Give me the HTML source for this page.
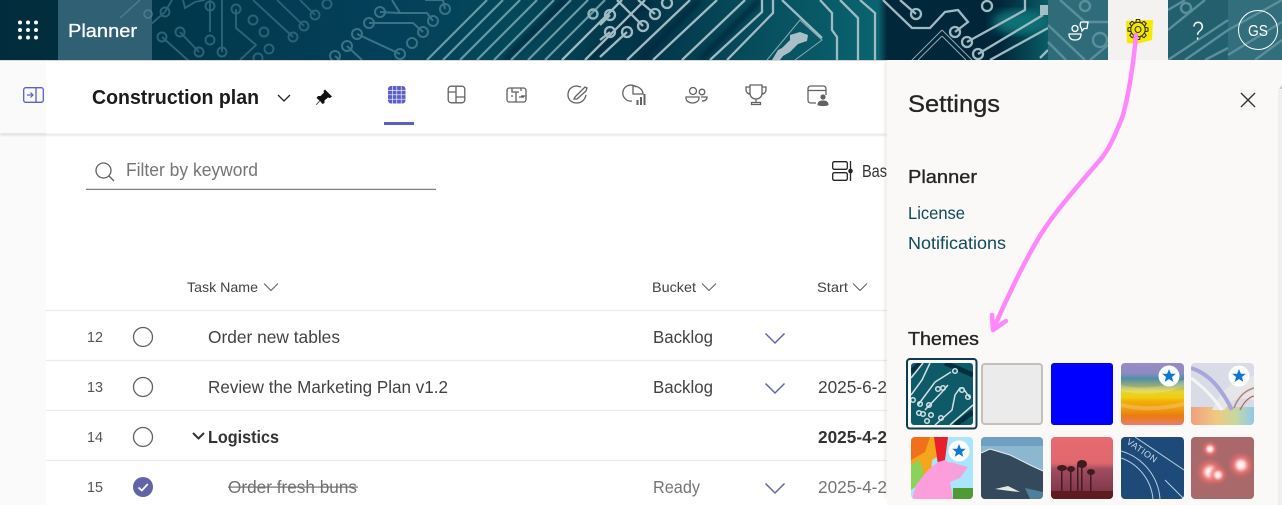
<!DOCTYPE html>
<html lang="en"><head><meta charset="utf-8"><title>Planner</title>
<style>
html,body{margin:0;padding:0;background:#fff;width:1282px;height:505px;overflow:hidden}
svg{display:block;font-family:"Liberation Sans",sans-serif;overflow:hidden}
</style></head><body>
<svg width="1282" height="505" viewBox="0 0 1282 505" xmlns="http://www.w3.org/2000/svg">
<defs>
<linearGradient id="bg" x1="0" x2="1" y1="0" y2="0">
<stop offset="0" stop-color="#02303f"/><stop offset=".3" stop-color="#03405a"/><stop offset=".4" stop-color="#05485a"/><stop offset=".5" stop-color="#023448"/><stop offset=".6" stop-color="#07505f"/><stop offset=".685" stop-color="#0a6470"/><stop offset=".692" stop-color="#01283a"/><stop offset=".78" stop-color="#01263a"/><stop offset=".82" stop-color="#0a6068"/><stop offset="1" stop-color="#1a5866"/>
</linearGradient>
<filter id="blur"><feGaussianBlur stdDeviation="5"/></filter>
<filter id="blur2"><feGaussianBlur stdDeviation="2.5"/></filter>
<filter id="sh" x="-5%" y="-50%" width="110%" height="200%"><feGaussianBlur stdDeviation="2"/></filter>
<clipPath id="bn"><rect width="1282" height="60"/></clipPath>
<clipPath id="t1"><rect x="911" y="363" width="62" height="62" rx="3"/></clipPath>
<clipPath id="t4"><rect x="1121" y="363" width="63" height="62" rx="4"/></clipPath>
<clipPath id="t5"><rect x="1191" y="363" width="63" height="62" rx="4"/></clipPath>
<clipPath id="t6"><rect x="911" y="437" width="62" height="62" rx="4"/></clipPath>
<clipPath id="t7"><rect x="981" y="437" width="62" height="62" rx="4"/></clipPath>
<clipPath id="t8"><rect x="1051" y="437" width="62" height="62" rx="4"/></clipPath>
<clipPath id="t9"><rect x="1121" y="437" width="63" height="62" rx="4"/></clipPath>
<clipPath id="t10"><rect x="1191" y="437" width="63" height="62" rx="4"/></clipPath>
<linearGradient id="g4" x1="0" x2="0" y1="0" y2="1">
<stop offset="0" stop-color="#9a8ac8"/><stop offset=".17" stop-color="#8a8cc0"/><stop offset=".25" stop-color="#4f8ea6"/><stop offset=".38" stop-color="#a0b070"/><stop offset=".45" stop-color="#e2d230"/><stop offset=".55" stop-color="#f0d010"/><stop offset=".62" stop-color="#f2ae08"/><stop offset=".75" stop-color="#ee9a10"/><stop offset=".85" stop-color="#e87c10"/><stop offset="1" stop-color="#ee7c6c"/>
</linearGradient>
<linearGradient id="g5" x1="0" x2="1" y1="0" y2="0">
<stop offset="0" stop-color="#f0a080"/><stop offset=".4" stop-color="#f0c880"/><stop offset=".7" stop-color="#c8d8a0"/><stop offset="1" stop-color="#90c8e8"/>
</linearGradient>
<linearGradient id="g8" x1="0" x2="0" y1="0" y2="1">
<stop offset="0" stop-color="#e76a70"/><stop offset=".42" stop-color="#e0686c"/><stop offset=".52" stop-color="#a04d60"/><stop offset=".85" stop-color="#83394a"/><stop offset="1" stop-color="#5e1c22"/>
</linearGradient>
<radialGradient id="gl"><stop offset="0" stop-color="#fff"/><stop offset=".25" stop-color="#ffe0e0"/><stop offset=".55" stop-color="#f07474" stop-opacity=".8"/><stop offset="1" stop-color="#d06060" stop-opacity="0"/></radialGradient>
<g id="star"><circle r="10.5" fill="#fff"/><polygon fill="#0f78d4" points="0,-7 1.9,-2.3 6.9,-2.2 3,1 4.3,5.9 0,3.1 -4.3,5.9 -3,1 -6.9,-2.2 -1.9,-2.3"/></g>
</defs>

<rect width="1282" height="505" fill="#fff"/>
<rect x="0" y="60" width="46" height="445" fill="#fafafa"/>

<!-- banner -->
<g clip-path="url(#bn)">
<rect width="1282" height="60" fill="url(#bg)"/>
<ellipse cx="1020" cy="22" rx="28" ry="12" fill="#0c7278" filter="url(#blur)"/>
<g fill="none" stroke="#012a3c" stroke-width="7" filter="url(#blur2)" opacity=".8">
<path d="M505 60 565 0M590 60 650 0M640 60 700 0M700 60 760 0"/>
</g>
<!-- dim left traces -->
<g fill="none" stroke="#2b6478" stroke-width="1.900">
<path d="M150 25 165 12M172 0 165 12M210 0V32M162 37 190 62M180 32 199 52M222 0V52M236 9V28L256 45 240 60M253 0 293 37M277 0 304 26M300 0 315 15"/>
<path d="M183 0 185 8 195 2 205 0" />
<circle cx="165" cy="12" r="4.500"/><circle cx="210" cy="6" r="4.500"/><circle cx="236" cy="9" r="4.500"/><circle cx="180" cy="32" r="4.500"/><circle cx="162" cy="37" r="4.500"/><circle cx="253" cy="20" r="4.500"/><circle cx="264" cy="32" r="4.500"/><circle cx="210" cy="40" r="4.500"/><circle cx="199" cy="52" r="4.500"/><circle cx="222" cy="52" r="4.500"/><circle cx="269" cy="49" r="4.500"/><circle cx="293" cy="37" r="4.500"/><circle cx="304" cy="26" r="4.500"/><circle cx="315" cy="15" r="4.500"/><circle cx="327" cy="4" r="4.500"/><circle cx="258" cy="58" r="4.500"/>
</g>
<g fill="none" stroke="#3a7385" stroke-width="2">
<path d="M380 12 398 13H427L433 21M369 23 390 23H413L423 32M347 46 362 60M335 56 340 60M392 0 400 13M425 0H443L445 9M357 34 400 54"/>
<circle cx="380" cy="12" r="5"/><circle cx="433" cy="21" r="5"/><circle cx="445" cy="9" r="5"/><circle cx="369" cy="23" r="5"/><circle cx="423" cy="32" r="5"/><circle cx="357" cy="34" r="5"/><circle cx="412" cy="43" r="5"/><circle cx="347" cy="46" r="5"/><circle cx="400" cy="54" r="5"/><circle cx="335" cy="56" r="5"/>
</g>
<!-- diagonal bus -->
<g fill="none" stroke="#689aa6" stroke-width="2.200">
<path d="M427 60 487 0M443 60 503 0M460 60 520 0M477 60 537 0M494 60 554 0M511 60 571 0M528 60 588 0M545 60 605 0"/>
<circle cx="593" cy="14" r="4.500" stroke="#8fb0ba" stroke-width="2.400"/>
</g>
<g fill="none" stroke="#a0bac3" stroke-width="2.300">
<path d="M562 60 622 0M585 60 645 0M627 60 690 0M653 60 717 0M682 60 745 0M710 60 762 12V0M727 60 773 13V0M782 0 822 38"/>
<path d="M617 0 643 26M638 0 655 14M600 57 627 32M600 40 610 32M600 25 610 15"/>
<path d="M820 0 832 13V30L837 37V60M840 0 858 18V60M860 0 875 13V60"/>
<path d="M883 0 912 28H930L945 12 958 10 968 22 955 32M900 0 916 14M967 42 1025 10V0M978 54 1043 15M990 60 1048 28"/>
<circle cx="610" cy="15" r="5"/><circle cx="655" cy="14" r="5"/><circle cx="667" cy="3" r="5"/><circle cx="610" cy="32" r="5"/><circle cx="627" cy="32" r="5"/><circle cx="643" cy="26" r="5"/>
<circle cx="916" cy="14" r="5"/><circle cx="987" cy="6" r="5"/><circle cx="955" cy="32" r="5"/><circle cx="967" cy="42" r="5"/><circle cx="978" cy="54" r="5"/>
<path d="M1040 58 1048 50"/>
</g>
<rect x="1040" y="5" width="8" height="10" fill="#a5bec6"/>
<g fill="none" stroke="#8fa9b3" stroke-width="1">
<path d="M942 30 912 60M942 30 972 60M942 36 918 60M942 36 966 60"/>
<path d="M767 60 800 20 822 40 795 60"/>
</g>
<path d="M772 60 778 50 782 48 790 40 790 35 800 32 808 35 807 41 798 44 790 52 783 56 780 60Z" fill="#a9bfc7"/>
<!-- chrome tiles -->
<rect x="0" y="0" width="58" height="60" fill="#02293a" opacity=".55"/>
<rect x="58" y="0" width="94" height="60" fill="#2f6074"/>
<g fill="none" stroke="#4a7d8e" stroke-width="1.500"><circle cx="148" cy="14" r="4"/><path d="M140 0 120 18"/></g>
<rect x="1048" y="0" width="60" height="60" fill="#2f6c79"/>
<rect x="1168" y="0" width="60" height="60" fill="#22606e"/>
<rect x="1228" y="0" width="54" height="60" fill="#336e7c"/>
<g fill="none" stroke="#5b8f9a" stroke-width="2.400">
<path d="M1048 42 1066 60M1048 25 1085 60M1060 0 1085 22 1108 22M1090 60 1108 45"/>
<circle cx="1100" cy="40" r="7"/><circle cx="1085" cy="6" r="5"/>
<path d="M1168 10 1185 0M1168 30 1205 0M1168 60 1228 20M1185 60 1228 30M1205 60 1228 48"/>
<circle cx="1186" cy="8" r="5"/>
<path d="M1228 30 1282 0M1228 55 1282 22M1255 60 1282 40"/>
</g>
<rect x="1108" y="0" width="60" height="60" fill="#f3f2f1"/>
</g>

<!-- waffle -->
<g fill="#fff"><circle cx="20" cy="22.500" r="2"/><circle cx="28" cy="22.500" r="2"/><circle cx="36" cy="22.500" r="2"/><circle cx="20" cy="30" r="2"/><circle cx="28" cy="30" r="2"/><circle cx="36" cy="30" r="2"/><circle cx="20" cy="37.500" r="2"/><circle cx="28" cy="37.500" r="2"/><circle cx="36" cy="37.500" r="2"/></g>
<text x="68" y="37" font-size="18.500" fill="#fff" stroke="#fff" stroke-width=".3" textLength="69" lengthAdjust="spacingAndGlyphs">Planner</text>

<!-- chat/people icon -->
<g fill="none" stroke="#fff" stroke-width="1.300">
<circle cx="1075" cy="28.500" r="3"/><path d="M1069 34H1081Q1081 40 1075 40 1069 40 1069 34Z"/>
<path d="M1081 22H1088L1087 28.500H1084L1082 31 1081.500 28.500Q1079 25 1081 22Z"/>
</g>
<!-- gear -->
<polygon points="1126,21 1153,20 1152,40 1136,44 1127,43" fill="#f6e800"/>
<g fill="none" stroke="#33330f" stroke-width="1.100" transform="translate(1138 29.500)">
<circle r="3"/><circle r="7.200"/>
<path id="tooth" d="M-2.200 -7 L-1.600 -10 H1.600 L2.200 -7"/>
<path d="M-2.200 -7 L-1.600 -10 H1.600 L2.200 -7" transform="rotate(45)"/>
<path d="M-2.200 -7 L-1.600 -10 H1.600 L2.200 -7" transform="rotate(90)"/>
<path d="M-2.200 -7 L-1.600 -10 H1.600 L2.200 -7" transform="rotate(135)"/>
<path d="M-2.200 -7 L-1.600 -10 H1.600 L2.200 -7" transform="rotate(180)"/>
<path d="M-2.200 -7 L-1.600 -10 H1.600 L2.200 -7" transform="rotate(225)"/>
<path d="M-2.200 -7 L-1.600 -10 H1.600 L2.200 -7" transform="rotate(270)"/>
<path d="M-2.200 -7 L-1.600 -10 H1.600 L2.200 -7" transform="rotate(315)"/>
</g>
<text x="1198" y="40" font-size="27" fill="#fff" stroke="#22606e" stroke-width=".5" text-anchor="middle" textLength="12" lengthAdjust="spacingAndGlyphs">?</text>
<circle cx="1258" cy="30" r="19.500" fill="none" stroke="#fff" stroke-width="1"/>
<text x="1248" y="36" font-size="16" fill="#fff" textLength="20" lengthAdjust="spacingAndGlyphs">GS</text>

<!-- header bar -->
<rect x="0" y="132" width="887" height="3" fill="#000" opacity=".16" filter="url(#sh)"/>
<rect x="0" y="60" width="46" height="73" fill="#fafafa"/>
<rect x="46" y="60" width="841" height="73.500" fill="#fff"/>
<rect x="0" y="60" width="887" height="1" fill="#d8d8d8"/>

<g fill="none" stroke="#5b5fc7" stroke-width="1.300">
<rect x="23.700" y="87.700" width="19.600" height="14.600" rx="2"/><path d="M36 88V102"/>
<path d="M27 95H33M30.500 92.500 33 95 30.500 97.500" stroke-width="1.200"/>
</g>
<text x="92" y="104" font-size="20" font-weight="700" fill="#1b1b1b" textLength="167" lengthAdjust="spacingAndGlyphs">Construction plan</text>
<path d="M278 95 284 101 290 95" fill="none" stroke="#242424" stroke-width="1.300"/>
<path d="M325 89.500 332 96.500 330 98 328 97.500 324.500 100.500 324.500 103 322.500 104 320 101 316.500 105 316 104.500 319.500 100.500 316.500 98 318 96 320.500 96 324 92.500 323.500 91Z" fill="#111"/>

<!-- tabs -->
<rect x="388" y="86" width="17.500" height="17.500" rx="3" fill="#5b5fc7"/>
<path d="M392.400 86V103.500M396.800 86V103.500M401.200 86V103.500M388 90.400H405.500M388 94.800H405.500M388 99.200H405.500" stroke="#fff" stroke-width=".6"/>
<rect x="384" y="122" width="30" height="3" fill="#5b5fc7"/>
<g fill="none" stroke="#616161" stroke-width="1.300">
<rect x="448.200" y="86.200" width="16.600" height="16.600" rx="3"/><path d="M456 86.500V103M448.500 92H456M456 97H464.500"/>
<rect x="507" y="88" width="19" height="14" rx="2.500"/><path d="M512 88V92H519M516 92V102M521 96H526M519 97H524M511 96H513M521 88V91"/>
<path d="M581 87 577 86C571 86 568 90 568 95 568 100 572 103 577 103 581 103 585 100 586 95"/><path d="M575 97 585 87 587 88 586 91 577 99 574 99Z"/>
<path d="M636 87A8 8 0 1 0 632 101M633 86V94H643C643 90 639 86 633 86Z"/>
<circle cx="693" cy="91" r="3.500"/><circle cx="702" cy="92" r="2.800"/><path d="M686 97H699V98C699 101 696 103 692.500 103 689 103 686 101 686 98ZM701 97H707C707 100 705 101 702 101"/>
<path d="M750 85H762V93C762 97 759 99 756 99 753 99 750 97 750 93ZM750 87H746V90C746 92 748 94 750 94M762 87H766V90C766 92 764 94 762 94M756 99V102M751.500 102.500H760.500V104.500H751.500Z"/>
<path d="M816 103H811Q808 103 808 100V89Q808 86 811 86H823Q826 86 826 89V95M808 90.500H826"/>
</g>
<g fill="#616161">
<rect x="636.500" y="100" width="2" height="5"/><rect x="640" y="97" width="2" height="8"/><rect x="643.500" y="94" width="2" height="11"/>
<circle cx="823" cy="97" r="2.600"/><path d="M817.500 105C817.500 101.500 819.500 100.500 823 100.500 826.500 100.500 828.500 101.500 828.500 105 826.500 106.500 819.500 106.500 817.500 105Z"/>
</g>

<!-- filter -->
<g fill="none" stroke="#616161" stroke-width="1.300"><circle cx="103.500" cy="170.500" r="7.500"/><path d="M109 176 114 181"/></g>
<text x="126" y="176" font-size="18" fill="#757575" textLength="132" lengthAdjust="spacingAndGlyphs">Filter by keyword</text>
<rect x="86" y="188.800" width="350" height="1" fill="#616161"/>

<g fill="none" stroke="#242424" stroke-width="1.300">
<rect x="832.700" y="161.700" width="14.600" height="7.600" rx="1.500"/><rect x="832.700" y="172.700" width="14.600" height="7.600" rx="1.500"/><path d="M850.500 161V181"/>
</g>
<circle cx="850.500" cy="171" r="2.300" fill="#242424"/>
<text x="862" y="177" font-size="17.500" fill="#333" textLength="25" lengthAdjust="spacingAndGlyphs">Bas</text>

<!-- table header -->
<g fill="#424242" font-size="14">
<text x="187" y="292" textLength="71" lengthAdjust="spacingAndGlyphs">Task Name</text>
<text x="652" y="292" textLength="44" lengthAdjust="spacingAndGlyphs">Bucket</text>
<text x="817" y="292" textLength="31" lengthAdjust="spacingAndGlyphs">Start</text>
</g>
<path d="M264 283.500 271 290.500 278 283.500M702 283.500 709 290.500 716 283.500M853 283.500 860 290.500 867 283.500" fill="none" stroke="#616161" stroke-width="1.100"/>

<!-- rows -->
<path d="M46 310.500H887M46 360.500H887M46 410.500H887M46 460.500H887" stroke="#ebebeb" stroke-width="1.200"/>
<g fill="#555" font-size="14.500">
<text x="87" y="342" textLength="16" lengthAdjust="spacingAndGlyphs">12</text>
<text x="87" y="392" textLength="16" lengthAdjust="spacingAndGlyphs">13</text>
<text x="87" y="442" textLength="16" lengthAdjust="spacingAndGlyphs">14</text>
<text x="87" y="492" textLength="16" lengthAdjust="spacingAndGlyphs">15</text>
</g>
<g fill="none" stroke="#616161" stroke-width="1.300">
<circle cx="143" cy="337" r="9.500"/><circle cx="143" cy="387" r="9.500"/><circle cx="143" cy="437" r="9.500"/>
</g>
<circle cx="143" cy="487" r="10" fill="#6264a7"/>
<path d="M138.500 487.500 141.800 490.500 147.800 484" fill="none" stroke="#fff" stroke-width="1.700"/>
<g font-size="17.500" fill="#424242">
<text x="208" y="343" textLength="132" lengthAdjust="spacingAndGlyphs">Order new tables</text>
<text x="208" y="393" textLength="240" lengthAdjust="spacingAndGlyphs">Review the Marketing Plan v1.2</text>
<text x="208" y="443" font-weight="700" fill="#333" textLength="71" lengthAdjust="spacingAndGlyphs">Logistics</text>
<text x="228" y="493" fill="#707070" textLength="129" lengthAdjust="spacingAndGlyphs">Order fresh buns</text>
<text x="653" y="343" textLength="60" lengthAdjust="spacingAndGlyphs">Backlog</text>
<text x="653" y="393" textLength="60" lengthAdjust="spacingAndGlyphs">Backlog</text>
<text x="653" y="493" fill="#757575" textLength="47" lengthAdjust="spacingAndGlyphs">Ready</text>
<text x="818" y="393" textLength="69" lengthAdjust="spacingAndGlyphs">2025-6-2</text>
<text x="818" y="443" font-weight="700" fill="#333" textLength="69" lengthAdjust="spacingAndGlyphs">2025-4-2</text>
<text x="818" y="493" fill="#757575" textLength="69" lengthAdjust="spacingAndGlyphs">2025-4-2</text>
</g>
<rect x="228" y="486.500" width="130" height="1.200" fill="#707070"/>
<path d="M193 433 198.500 438.500 204 433" fill="none" stroke="#333" stroke-width="2"/>
<path d="M765.500 333.500 775 343 784.500 333.500M765.500 383.500 775 393 784.500 383.500M765.500 483.500 775 493 784.500 483.500" fill="none" stroke="#6264a7" stroke-width="1.500"/>

<!-- settings panel -->
<rect x="884" y="62" width="5" height="436" fill="#000" opacity=".07" filter="url(#sh)"/>
<rect x="887" y="60" width="395" height="445" fill="#faf9f8"/>
<rect x="1278" y="90" width="4" height="415" fill="#f0efee"/>
<path d="M1279 89 1282 85V89Z" fill="#c8c8c8"/>
<text x="908" y="112" font-size="24.500" fill="#242424" stroke="#242424" stroke-width=".3" textLength="92" lengthAdjust="spacingAndGlyphs">Settings</text>
<path d="M1241 93 1255 107M1255 93 1241 107" stroke="#323130" stroke-width="1.400" fill="none"/>
<text x="908" y="183" font-size="18.500" fill="#242424" stroke="#242424" stroke-width=".35" textLength="69" lengthAdjust="spacingAndGlyphs">Planner</text>
<text x="908" y="219" font-size="17.500" fill="#0f4a5c" textLength="57" lengthAdjust="spacingAndGlyphs">License</text>
<text x="908" y="249" font-size="17.500" fill="#0f4a5c" textLength="98" lengthAdjust="spacingAndGlyphs">Notifications</text>
<text x="908" y="345" font-size="18.500" fill="#242424" stroke="#242424" stroke-width=".35" textLength="71" lengthAdjust="spacingAndGlyphs">Themes</text>

<!-- theme 1 -->
<rect x="907" y="359" width="69.500" height="69.500" rx="3" fill="none" stroke="#0d3c4c" stroke-width="2"/>
<g clip-path="url(#t1)">
<rect x="911" y="363" width="62" height="62" fill="#0f5a68"/>
<path d="M911 372 921 363M945 363 973 375M955 425 973 412" stroke="#02303f" stroke-width="5" fill="none"/>
<g fill="none" stroke="#d4e2e6" stroke-width="1.500">
<path d="M911 395 922 380 930 363M918 405 935 382 951 372M925 410 942 392 948 385M935 425 952 410 955 395 960 388H963L970 398M950 425 973 405M911 378 923 363"/>
<circle cx="913" cy="400" r="2.300"/><circle cx="920" cy="404" r="2.300"/><circle cx="929" cy="405" r="2.300"/><circle cx="938" cy="389" r="2.300"/><circle cx="943" cy="388" r="2.300"/><circle cx="955" cy="371" r="2.300"/><circle cx="962" cy="390" r="2.300"/><circle cx="968" cy="397" r="2.300"/><circle cx="919" cy="413" r="2.300"/><circle cx="923" cy="414" r="2.300"/><circle cx="931" cy="415" r="2.300"/><circle cx="941" cy="418" r="2.300"/><circle cx="927" cy="421" r="2.300"/>
</g>
</g>
<!-- theme 2 -->
<rect x="982" y="364" width="60" height="60" rx="3" fill="#ebebeb" stroke="#c4bfbb" stroke-width="2"/>
<!-- theme 3 -->
<rect x="1051" y="363" width="62" height="62" rx="3" fill="#0000ff"/>
<!-- theme 4 -->
<g clip-path="url(#t4)">
<rect x="1121" y="363" width="63" height="62" fill="url(#g4)"/>
<path d="M1121 385Q1150 392 1184 380V387Q1150 398 1121 391ZM1121 403Q1150 410 1184 402V406Q1150 414 1121 407Z" fill="#fff" opacity=".2"/>
</g>
<use href="#star" x="1169" y="376"/>
<!-- theme 5 -->
<g clip-path="url(#t5)">
<rect x="1191" y="363" width="63" height="62" fill="#d9dbe6"/>
<rect x="1191" y="407" width="63" height="18" fill="url(#g5)"/>
<path d="M1212 410Q1225 380 1254 376L1254 400Q1230 395 1225 410Z" fill="#e6e6ea"/>
<path d="M1191 368Q1215 375 1232 410" fill="none" stroke="#a9a6dc" stroke-width="4"/>
<path d="M1191 378Q1210 392 1222 410" fill="none" stroke="#f4f4f6" stroke-width="3"/>
<path d="M1234 408Q1240 392 1254 388" fill="none" stroke="#b58370" stroke-width="1.500"/>
<path d="M1240 410Q1246 398 1254 396" fill="none" stroke="#b5685a" stroke-width="1.200"/>
</g>
<use href="#star" x="1239" y="376"/>
<!-- theme 6 -->
<g clip-path="url(#t6)">
<rect x="911" y="437" width="62" height="62" fill="#a9e6fb"/>
<path d="M911 437H945L940 455 932 460 930 490 922 485 911 470Z" fill="#f5a51c"/>
<path d="M911 437H930L925 452 911 460Z" fill="#f0701c"/>
<path d="M934 437H948L945 460 938 465Z" fill="#e8202c"/>
<path d="M911 465 920 460 925 480 911 490Z" fill="#8bd25a"/>
<path d="M912 499 916 485 928 470 938 462 945 460 958 468 960 478 950 482 953 499Z" fill="#fb9edb"/>
<path d="M950 462 968 467 960 478 952 474Z" fill="#f5a0d8"/>
<rect x="953" y="488" width="20" height="11" fill="#4f9a35"/>
</g>
<use href="#star" x="959" y="451"/>
<!-- theme 7 -->
<g clip-path="url(#t7)">
<rect x="981" y="437" width="62" height="62" fill="#8db6d1"/>
<rect x="981" y="437" width="62" height="9" fill="#6f9fc2"/>
<path d="M981 453 990 449 1010 455 1030 465 1043 471V499H981Z" fill="#34495b"/>
<path d="M981 453 990 449 1010 455 1030 465 1043 471" fill="none" stroke="#e8f0f4" stroke-width="1"/>
<path d="M995 489 1008 486 1020 492 1010 491Z" fill="#e8e6e0"/>
<path d="M1025 488 1043 492V499H1030Z" fill="#4e7f9c"/>
</g>
<!-- theme 8 -->
<g clip-path="url(#t8)">
<rect x="1051" y="437" width="62" height="62" fill="url(#g8)"/>
<g fill="#421a22"><rect x="1061" y="470" width="1.500" height="22"/><rect x="1070" y="470" width="1.500" height="22"/><rect x="1077" y="465" width="1.500" height="27"/><rect x="1081" y="465" width="1.500" height="27"/><rect x="1090" y="472" width="1.500" height="20"/>
<ellipse cx="1062" cy="468" rx="5" ry="3"/><ellipse cx="1071" cy="469" rx="4" ry="3"/><ellipse cx="1082" cy="464" rx="5" ry="4"/><ellipse cx="1091" cy="472" rx="4" ry="3"/><rect x="1051" y="491" width="62" height="8" fill="#5e1c22"/></g>
</g>
<!-- theme 9 -->
<g clip-path="url(#t9)">
<rect x="1121" y="437" width="63" height="62" fill="#1d4a78"/>
<g fill="none" stroke="#b8cde0" stroke-width="1"><path d="M1121 458A48 48 0 0 1 1153 499M1121 451A54 54 0 0 1 1160 499M1135 437 1184 470M1165 480 1184 499"/></g>
<text x="1126" y="443" font-size="9" fill="#c8d8e6" transform="rotate(35 1126 443)" letter-spacing=".5">VATION</text>
</g>
<!-- theme 10 -->
<g clip-path="url(#t10)">
<rect x="1191" y="437" width="63" height="62" fill="#a9696b"/>
<circle cx="1210" cy="449" r="9" fill="url(#gl)"/><circle cx="1241" cy="465" r="14" fill="url(#gl)"/><circle cx="1210" cy="472" r="15" fill="url(#gl)"/><circle cx="1218" cy="475" r="10" fill="url(#gl)"/>
</g>

<!-- annotation -->
<path d="M1136 35C1134 60 1128 100 1122 118 1115 135 1110 148 1100 160 1090 172 1060 205 1045 228 1030 250 1008 295 993 330M992 315 993 330 1006 321" fill="none" stroke="#ff86fb" stroke-width="4.500" stroke-linecap="round" stroke-linejoin="round"/>
</svg>
</body></html>
